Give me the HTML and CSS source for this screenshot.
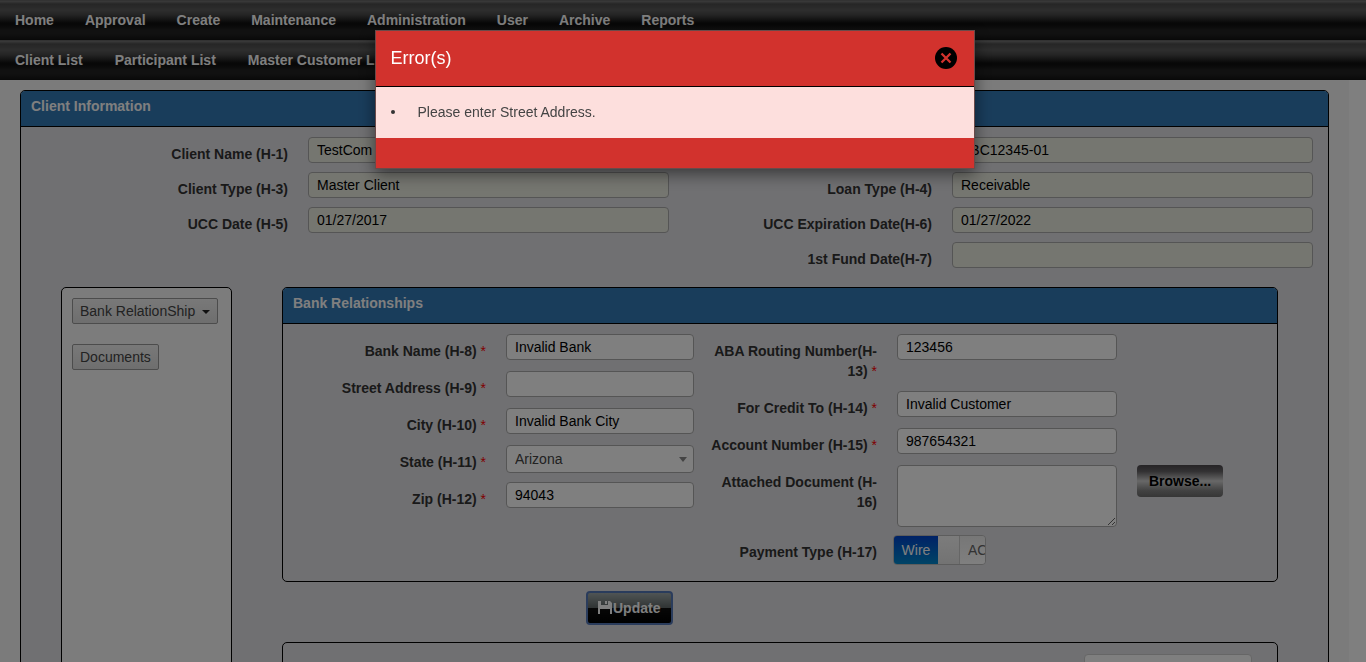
FILE: index.html
```html
<!DOCTYPE html>
<html lang="en">
<head>
<meta charset="utf-8">
<meta name="viewport" content="width=device-width, initial-scale=1">
<title>Client Information</title>
<link rel="stylesheet" href="styles.css">
</head>
<body>
<nav class="menu">
  <a href="#">Home</a><a href="#">Approval</a><a href="#">Create</a><a href="#">Maintenance</a><a href="#">Administration</a><a href="#">User</a><a href="#">Archive</a><a href="#">Reports</a>
</nav>
<nav class="menu submenu">
  <a href="#">Client List</a><a href="#">Participant List</a><a href="#">Master Customer List</a>
</nav>
<main class="page">
  <section class="panel client">
    <h2 class="panel-heading">Client Information</h2>
    <div class="client-fields">
      <div class="field"><label for="h1">Client Name (H-1)</label><input id="h1" value="TestCom" readonly></div>
      <div class="field"><label for="h2">Client Number (H-2)</label><input id="h2" value="ABC12345-01" readonly></div>
      <div class="field"><label for="h3">Client Type (H-3)</label><input id="h3" value="Master Client" readonly></div>
      <div class="field"><label for="h4">Loan Type (H-4)</label><input id="h4" value="Receivable" readonly></div>
      <div class="field"><label for="h5">UCC Date (H-5)</label><input id="h5" value="01/27/2017" readonly></div>
      <div class="field"><label for="h6">UCC Expiration Date(H-6)</label><input id="h6" value="01/27/2022" readonly></div>
      <div class="field field-right"><label for="h7">1st Fund Date(H-7)</label><input id="h7" value="" readonly></div>
    </div>
    <div class="columns">
      <aside class="side">
        <button type="button" class="side-button">Bank RelationShip <span class="caret"></span></button>
        <button type="button" class="side-button">Documents</button>
      </aside>
      <div class="content">
        <form class="panel">
          <h2 class="panel-heading">Bank Relationships</h2>
          <div class="bank-fields">
            <div class="stack stack-left">
              <div class="field"><label for="h8">Bank Name (H-8) <span class="req">*</span></label><input id="h8" value="Invalid Bank"></div>
              <div class="field"><label for="h9">Street Address (H-9) <span class="req">*</span></label><input id="h9" value=""></div>
              <div class="field"><label for="h10">City (H-10) <span class="req">*</span></label><input id="h10" value="Invalid Bank City"></div>
              <div class="field"><label for="h11">State (H-11) <span class="req">*</span></label><span class="select-wrap"><select id="h11"><option>Arizona</option></select></span></div>
              <div class="field"><label for="h12">Zip (H-12) <span class="req">*</span></label><input id="h12" value="94043"></div>
            </div>
            <div class="stack stack-right">
              <div class="field"><label for="h13">ABA Routing Number(H-13) <span class="req">*</span></label><input id="h13" value="123456"></div>
              <div class="field"><label for="h14">For Credit To (H-14) <span class="req">*</span></label><input id="h14" value="Invalid Customer"></div>
              <div class="field"><label for="h15">Account Number (H-15) <span class="req">*</span></label><input id="h15" value="987654321"></div>
              <div class="field field-document"><label for="h16">Attached Document (H-16)</label><textarea id="h16"></textarea><button type="button" class="browse">Browse...</button></div>
              <div class="field field-switch"><label for="h17">Payment Type (H-17)</label><label class="switch" for="h17"><input id="h17" type="checkbox" checked><span class="switch-on">Wire</span><span class="switch-knob"></span><span class="switch-off">ACH</span></label></div>
            </div>
          </div>
        </form>
        <div class="actions">
          <button type="button" class="update"><svg viewBox="0 0 14 14" width="14" height="14" aria-hidden="true"><path fill-rule="evenodd" d="M0 0h3v4h7V0h2l2 2v11h-2V8H2v5H0zM7 0h2v3H7z"/></svg>Update</button>
        </div>
        <section class="panel results">
          <input class="search" type="search" aria-label="Search">
        </section>
      </div>
    </div>
  </section>
</main>
<div class="backdrop">
  <div class="modal" role="dialog" aria-modal="true" aria-labelledby="error-title">
    <header class="modal-header">
      <h1 id="error-title">Error(s)</h1>
      <button type="button" class="close" aria-label="Close"><svg viewBox="0 0 22 22" width="22" height="22" aria-hidden="true"><circle cx="11" cy="11" r="11"/><path d="M6.500 6.500l9 9M15.500 6.500l-9 9" stroke="#d2322d" stroke-width="2.300"/></svg></button>
    </header>
    <ul class="errors"><li>Please enter Street Address.</li></ul>
    <footer class="modal-footer"></footer>
  </div>
</div>
</body>
</html>
```
FILE: styles.css
```css
* { box-sizing: border-box; }

body {
  display: flex;
  flex-direction: column;
  height: 100vh;
  margin: 0;
  overflow: hidden;
  background: #fff;
  color: #333;
  font: 14px/20px "Liberation Sans", Arial, sans-serif;
}

input, select, textarea, button {
  margin: 0;
  font: inherit;
}

.menu {
  display: flex;
  flex: none;
  gap: 31px;
  height: 40px;
  padding: 0 15px;
  background: linear-gradient(#555 0, #777 1px, #5c5c5c 3px, #4c4c4c 4px, #5c5c5c 10px, #484848 15px, #101010 23px, #101010 25px, #222 30px, #222 34px, #121212 40px);
}

.submenu { gap: 32px; }

.menu a {
  color: #fff;
  font-weight: bold;
  line-height: 40px;
  text-decoration: none;
}

.page {
  display: flex;
  flex: 1 0 auto;
  margin-right: 17px;
  padding: 10px 20px 0;
  background: #f6f6f6;
}

.panel {
  border: 1px solid #000;
  border-radius: 5px;
  background: #e0e0e4;
}

.panel-heading {
  height: 36px;
  margin: 0;
  padding: 5px 10px;
  border-bottom: 1px solid #000;
  border-radius: 4px 4px 0 0;
  background: #337ab7;
  color: #fff;
  font-size: 14px;
  line-height: 20px;
}

.client {
  flex: 1;
  min-width: 0;
}

.client-fields {
  display: grid;
  grid-template-columns: 1fr 1fr;
  row-gap: 8px;
  padding: 10px 15px 0 4px;
}

.field {
  display: grid;
  grid-template-columns: 263fr 361fr;
  column-gap: 20px;
  align-items: start;
}

.field-right { grid-column: 2; }

.field > label:first-child {
  padding-top: 7px;
  font-weight: bold;
  text-align: right;
}

.req {
  color: #f00;
  font-weight: normal;
}

.field > input, select, textarea {
  width: 100%;
  height: 26px;
  padding: 2px 8px;
  border: 1px solid #aaa;
  border-radius: 4px;
  background: #fff;
  color: #000;
  outline: 0;
}

.field > input[readonly] { background: #ebece1; }

.columns {
  display: grid;
  grid-template-columns: 171px 1fr;
  gap: 50px;
  margin-top: 18px;
  padding: 0 50px 40px 40px;
}

.side {
  display: flex;
  flex-direction: column;
  align-items: flex-start;
  gap: 20px;
  padding: 10px;
  border: 1px solid #000;
  border-radius: 5px;
  background: #f8f8f8;
}

.side-button {
  height: 26px;
  padding: 0 7px;
  border: 1px solid #999;
  border-radius: 2px;
  background: linear-gradient(#f2f2f2, #ddd);
  color: #444;
  white-space: nowrap;
}

.caret {
  display: inline-block;
  margin-left: 3px;
  border: 4px solid transparent;
  border-top-color: #222;
  border-bottom: 0;
  vertical-align: middle;
}

.bank-fields {
  display: grid;
  grid-template-columns: 411px 1fr;
  column-gap: 12px;
  padding: 10px 16px 16px 0;
}

.stack {
  display: flex;
  flex-direction: column;
  gap: 10px;
}

.stack-left .field { grid-template-columns: 1fr 188px; }
.stack-right .field { grid-template-columns: 171px 220px auto; justify-content: start; }

.select-wrap {
  position: relative;
  height: 27px;
}

.select-wrap::after {
  position: absolute;
  top: 12px;
  right: 7px;
  border: 4px solid transparent;
  border-top: 5px solid #888;
  border-bottom: 0;
  content: "";
  pointer-events: none;
}

select {
  height: 28px;
  appearance: none;
  color: #444;
}

textarea {
  display: block;
  height: 62px;
}

.stack-right .field-document { margin-bottom: -2px; }

.browse {
  height: 32px;
  padding: 0 12px;
  border: 0;
  border-radius: 4px;
  background: linear-gradient(#4c484d, #656366 20%, #d0d0d0 50%, #858585 80%, #6c6c6c);
  color: #000;
  font-weight: bold;
}

.stack-right .field-switch { column-gap: 16px; }

.switch {
  display: flex;
  width: 93px;
  height: 30px;
  overflow: hidden;
  border: 1px solid #bbb;
  border-radius: 4px;
  line-height: 28px;
}

.switch input {
  position: absolute;
  opacity: 0;
}

.switch-on {
  flex: 0 0 44px;
  background: linear-gradient(#04c, #08c);
  color: #fff;
  text-align: center;
}

.switch-knob {
  flex: 0 0 22px;
  border-right: 1px solid #ccc;
  background: linear-gradient(#f8f8f8, #e6e6e6);
}

.switch-off {
  flex: 1 0 45px;
  padding-left: 8px;
  background: linear-gradient(#eee, #fff);
  color: #666;
}

.actions {
  padding: 9px 0 17px 304px;
}

.update {
  display: flex;
  align-items: center;
  height: 34px;
  padding: 0 11px 0 10px;
  border: 2px solid #5578b8;
  border-radius: 4px;
  background: linear-gradient(#a0aaaa, #606868 50%, #0e0e0e 50%, #000);
  color: #fff;
  font-weight: bold;
}

.update svg {
  margin-right: 1px;
  fill: #fff;
}

.results {
  display: flex;
  justify-content: flex-end;
  height: 90px;
  padding: 11px 25px;
}

.search {
  width: 168px;
  height: 30px;
  border: 1px solid #ccc;
  border-radius: 4px;
  background: #fff;
}

.backdrop {
  position: fixed;
  inset: 0;
  padding: 30px 17px 0 0;
  background: rgba(0, 0, 0, 0.5);
}

.modal {
  width: 600px;
  max-width: 100%;
  margin: 0 auto;
  border: 1px solid rgba(80, 80, 80, 0.8);
  background: #d2322d;
  box-shadow: 0 5px 15px rgba(0, 0, 0, 0.5);
}

.modal-header {
  display: flex;
  align-items: center;
  justify-content: space-between;
  height: 56px;
  padding: 0 17px 2px 15px;
  border-bottom: 1px solid #000;
}

.modal-header h1 {
  margin: 0;
  color: #fff;
  font-size: 18px;
  font-weight: normal;
}

.close {
  padding: 0;
  border: 0;
  background: none;
}

.close svg { display: block; }

.errors {
  margin: 0;
  padding: 15px 15px 16px 42px;
  background: #fddfdd;
  color: #444;
  list-style: none;
}

.errors li::before {
  display: inline-block;
  width: 4px;
  height: 4px;
  margin: 0 23px 3px -27px;
  border-radius: 2px;
  background: #333;
  content: "";
}

.modal-footer { height: 30px; }
```
